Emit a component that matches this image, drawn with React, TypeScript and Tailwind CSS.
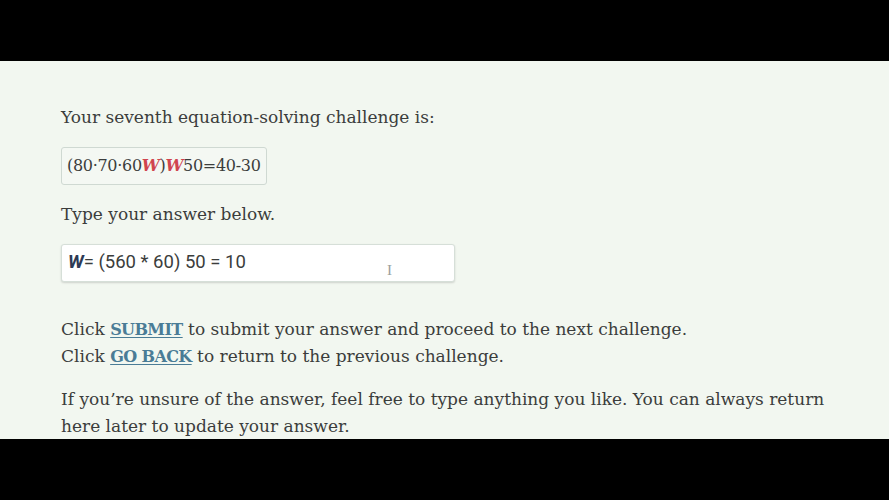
export default function App() {
  return (
    <div className="flex h-[500px] w-[889px] flex-col bg-black">
      <div className="h-[61px] shrink-0 bg-black" />
      <div className="h-[378px] shrink-0 overflow-hidden bg-[#f2f7f0] px-[61px] pt-[43px] font-['DejaVu_Serif',serif] text-[17px] text-[#3b3d3c]">
        <p className="leading-[26px]">Your seventh equation-solving challenge is:</p>
        <div className="mt-[17px] inline-flex h-[38px] items-center rounded-[3px] border border-[#cfd9d2] bg-[#f4f8f3] px-[5px] text-[16px] tracking-[-0.3px]">
          <span>(80·70·60</span>
          <span className="font-bold italic text-[#d0454f]">W</span>
          <span>)</span>
          <span className="font-bold italic text-[#d0454f]">W</span>
          <span>50=40-30</span>
        </div>
        <p className="mt-[16px] leading-[26px]">Type your answer below.</p>
        <div className="mt-[17px] flex h-[38px] w-[394px] items-center justify-between rounded-[3px] border border-[#d6dfd8] bg-white px-[6px] shadow-[0_1px_2px_rgba(0,0,0,0.15)]">
          <span className="font-['Roboto',sans-serif] text-[18.5px] text-[#3b3d3c]">
            <span className="font-bold italic text-[#2d3a55]">W</span>= (560 * 60) 50 = 10
          </span>
          <span className="mr-[56px] mt-[14px] font-['Liberation_Serif',serif] text-[15px] text-[#9aa09c]">I</span>
        </div>
        <p className="mt-[34px] leading-[27px]">
          Click{' '}
          <a className="text-[16px] font-bold tracking-[-0.6px] text-[#4a7c96] underline underline-offset-2">SUBMIT</a> to submit your answer and proceed to the next challenge.
          <br />
          Click{' '}
          <a className="text-[16px] font-bold tracking-[-0.6px] text-[#4a7c96] underline underline-offset-2">GO BACK</a> to return to the previous challenge.
        </p>
        <p className="mt-[16px] leading-[27px]">
          If you’re unsure of the answer, feel free to type anything you like. You can always return here later to update your answer.
        </p>
      </div>
      <div className="flex-1 bg-black" />
    </div>
  )
}
